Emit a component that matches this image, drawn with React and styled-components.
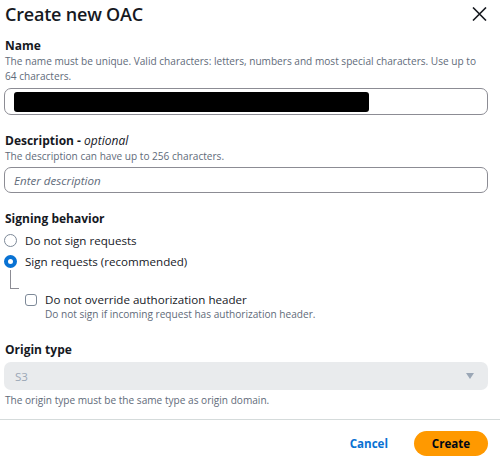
import React from 'react';
import styled, { createGlobalStyle } from 'styled-components';

const GlobalStyle = createGlobalStyle`
  body {
    margin: 0;
    background: #ffffff;
    font-family: 'Open Sans', 'Noto Sans', Arial, sans-serif;
    color: #16191f;
  }
`;

const Modal = styled.div`
  width: 500px;
  height: 464px;
  display: flex;
  flex-direction: column;
  overflow: hidden;
`;

const Header = styled.div`
  display: flex;
  justify-content: space-between;
  align-items: center;
  height: 28px;
  padding: 0 13px 0 5px;
`;

const Title = styled.h2`
  margin: 0;
  font-size: 18px;
  font-weight: 600;
  letter-spacing: -0.2px;
  line-height: 28px;
`;

const CloseButton = styled.button`
  border: 0;
  background: none;
  padding: 0;
  width: 16px;
  height: 16px;
  display: flex;
  align-items: center;
  justify-content: center;
  color: #16191f;
  cursor: pointer;
`;

const Body = styled.div`
  padding: 10px 12px 0 4px;
  display: flex;
  flex-direction: column;
`;

const Field = styled.div`
  display: flex;
  flex-direction: column;
  margin-top: ${(p) => p.$gap || 0}px;
`;

const Label = styled.div`
  font-size: 12px;
  font-weight: 700;
  line-height: 16px;
  padding-left: 1px;

  em {
    font-weight: 400;
    font-style: italic;
  }
`;

const Hint = styled.div`
  font-size: 10.1px;
  line-height: 15px;
  color: #5f6b7a;
  padding-left: ${(p) => p.$indent || 1}px;
  margin-top: ${(p) => p.$top || 0}px;
`;

const InputBox = styled.div`
  margin-top: ${(p) => p.$top || 3}px;
  height: ${(p) => p.$height || 26}px;
  box-sizing: border-box;
  border: 1px solid #8c8c94;
  border-radius: 7px;
  display: flex;
  align-items: center;
  padding: 0 10px 0 9px;
`;

const Redacted = styled.div`
  width: 355px;
  height: 20px;
  background: #000000;
  border-radius: 3px;
`;

const Placeholder = styled.span`
  font-size: 11.6px;
  font-style: italic;
  color: #5f6b7a;
`;

const RadioGroup = styled.div`
  display: flex;
  flex-direction: column;
  margin-top: 3px;
`;

const RadioRow = styled.label`
  display: flex;
  align-items: center;
  height: 21px;
  gap: 8px;
  font-size: 11.6px;
`;

const RadioDot = styled.span`
  width: 13px;
  height: 13px;
  box-sizing: border-box;
  border-radius: 50%;
  border: ${(p) => (p.$checked ? '4px solid #0972d3' : '1.5px solid #7d8998')};
  background: #ffffff;
  flex: none;
`;

const Nested = styled.div`
  display: flex;
  align-items: flex-start;
`;

const Connector = styled.div`
  width: 8px;
  height: 18px;
  margin: -2px 0 0 6px;
  border-left: 1px solid #8c8c94;
  border-bottom: 1px solid #8c8c94;
  flex: none;
`;

const CheckColumn = styled.div`
  display: flex;
  flex-direction: column;
  margin: 20px 0 0 6px;
`;

const CheckRow = styled.label`
  display: flex;
  align-items: center;
  gap: 8px;
  font-size: 11.6px;
  line-height: 16px;
`;

const CheckBox = styled.span`
  width: 12px;
  height: 12px;
  box-sizing: border-box;
  border: 1.5px solid #7d8998;
  border-radius: 3px;
  flex: none;
`;

const Select = styled.div`
  margin-top: 4px;
  height: 28px;
  border-radius: 7px;
  background: #e9ebed;
  display: flex;
  align-items: center;
  justify-content: space-between;
  padding: 0 14px 0 11px;
  font-size: 11.6px;
  color: #9ba7b6;
`;

const Caret = styled.span`
  width: 0;
  height: 0;
  border-left: 4.5px solid transparent;
  border-right: 4.5px solid transparent;
  border-top: 6px solid #9ba7b6;
`;

const Divider = styled.hr`
  margin: 11px 0 0;
  border: 0;
  border-top: 1px solid #d5dbdb;
`;

const Footer = styled.div`
  display: flex;
  justify-content: flex-end;
  align-items: center;
  gap: 26px;
  padding: 11px 12px 0 0;
`;

const LinkButton = styled.button`
  border: 0;
  background: none;
  padding: 0;
  font-family: inherit;
  font-size: 11.6px;
  font-weight: 700;
  color: #0972d3;
`;

const PrimaryButton = styled.button`
  border: 0;
  height: 25px;
  width: 74px;
  border-radius: 13px;
  background: #ff9900;
  font-family: inherit;
  font-size: 11.6px;
  font-weight: 700;
  color: #000716;
`;

export default function App() {
  return (
    <Modal>
      <GlobalStyle />
      <Header>
        <Title>Create new OAC</Title>
        <CloseButton aria-label="Close">
          <svg width="15" height="14" viewBox="0 0 15 14" fill="none">
            <path d="M1 0.5L14 13.5M14 0.5L1 13.5" stroke="#16191f" strokeWidth="1.6" />
          </svg>
        </CloseButton>
      </Header>
      <Body>
        <Field>
          <Label>Name</Label>
          <Hint>
            The name must be unique. Valid characters: letters, numbers and most special characters. Use up to
            64 characters.
          </Hint>
          <InputBox $top={4} $height={27}>
            <Redacted />
          </InputBox>
        </Field>
        <Field $gap={18}>
          <Label>
            Description - <em>optional</em>
          </Label>
          <Hint>The description can have up to 256 characters.</Hint>
          <InputBox>
            <Placeholder>Enter description</Placeholder>
          </InputBox>
        </Field>
        <Field $gap={18}>
          <Label>Signing behavior</Label>
          <RadioGroup>
            <RadioRow>
              <RadioDot />
              Do not sign requests
            </RadioRow>
            <RadioRow>
              <RadioDot $checked />
              Sign requests (recommended)
            </RadioRow>
          </RadioGroup>
          <Nested>
            <Connector />
            <CheckColumn>
              <CheckRow>
                <CheckBox />
                Do not override authorization header
              </CheckRow>
              <Hint $indent={20} $top={-1}>Do not sign if incoming request has authorization header.</Hint>
            </CheckColumn>
          </Nested>
        </Field>
        <Field $gap={20}>
          <Label>Origin type</Label>
          <Select>
            S3
            <Caret />
          </Select>
          <Hint $top={3}>The origin type must be the same type as origin domain.</Hint>
        </Field>
      </Body>
      <Divider />
      <Footer>
        <LinkButton>Cancel</LinkButton>
        <PrimaryButton>Create</PrimaryButton>
      </Footer>
    </Modal>
  );
}
